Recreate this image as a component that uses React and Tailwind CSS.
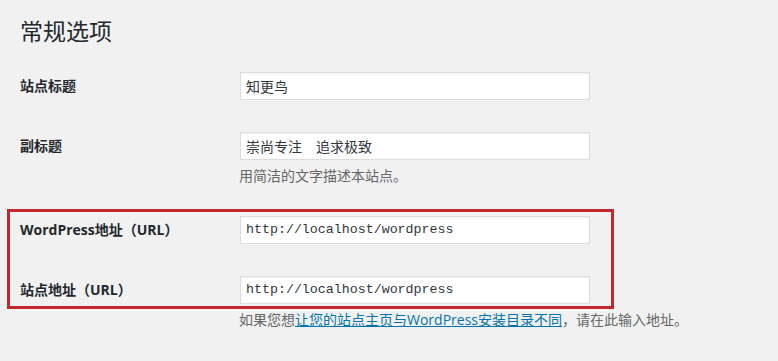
import React from "react";

// Settings → General (常规选项), WordPress admin style
const FONT = "font-['Open_Sans','Noto_Sans_CJK_SC',sans-serif]";

function TextInput({ value, mono = false }) {
  return (
    <div
      className={`w-[350px] h-[28px] bg-white border border-[#dddddd] shadow-[inset_0_1px_2px_rgba(0,0,0,0.07)] flex items-center px-[5px] text-[#32373c] ${
        mono
          ? "font-['Liberation_Mono','DejaVu_Sans_Mono',monospace] text-[13.3px]"
          : "text-[14px]"
      }`}
    >
      {value}
    </div>
  );
}

function Row({ label, children, className = "" }) {
  return (
    <div className={`flex items-center ${className}`}>
      <div className="w-[220px] shrink-0 text-[14px] font-bold text-[#23282d] leading-[20px]">
        {label}
      </div>
      {children}
    </div>
  );
}

export default function App() {
  return (
    <div className={`min-h-[361px] w-full bg-[#f1f1f1] ${FONT}`}>
      <h1 className="pl-5 pt-[17px] text-[23px] leading-[29px] font-normal text-[#23282d]">
        常规选项
      </h1>

      <div className="pl-5 mt-[26px]">
        <Row label="站点标题">
          <TextInput value="知更鸟" />
        </Row>

        <Row label="副标题" className="mt-[32px]">
          <TextInput value="崇尚专注　追求极致" />
        </Row>
        <p className="ml-[219px] mt-[6px] text-[14px] leading-[20px] text-[#666666]">
          用简洁的文字描述本站点。
        </p>
      </div>

      {/* highlighted URL block */}
      <div className="ml-[7px] mt-[23px] w-[607px] border-[3px] border-[#c4262e] pl-[10px] pt-[4px] pb-[2px]">
        <Row label="WordPress地址（URL）">
          <TextInput value="http://localhost/wordpress" mono />
        </Row>
        <Row label="站点地址（URL）" className="mt-[32px]">
          <TextInput value="http://localhost/wordpress" mono />
        </Row>
      </div>

      <p className="ml-[239px] mt-[1px] text-[14px] leading-[20px] text-[#666666]">
        如果您想
        <a href="#" className="text-[#0073aa] underline">
          让您的站点主页与WordPress安装目录不同
        </a>
        ，请在此输入地址。
      </p>
    </div>
  );
}
